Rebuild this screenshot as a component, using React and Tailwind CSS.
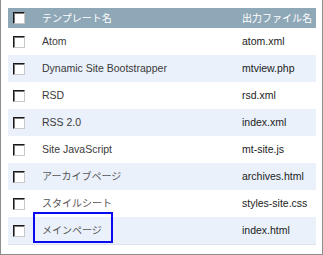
import React from 'react';

const rows = [
  { name: 'Atom', file: 'atom.xml' },
  { name: 'Dynamic Site Bootstrapper', file: 'mtview.php' },
  { name: 'RSD', file: 'rsd.xml' },
  { name: 'RSS 2.0', file: 'index.xml' },
  { name: 'Site JavaScript', file: 'mt-site.js' },
  { name: 'アーカイブページ', file: 'archives.html', jp: true },
  { name: 'スタイルシート', file: 'styles-site.css', jp: true },
  { name: 'メインページ', file: 'index.html', jp: true },
];

const Box = () => (
  <span className="block w-[12px] h-[12px] bg-white border border-t-[#1a1a1a] border-l-[#1a1a1a] border-r-[#c8c8c8] border-b-[#c8c8c8] shadow-[inset_1px_1px_0_#7a7a7a]" />
);

const jpFont = { fontFamily: '"Noto Sans CJK JP", sans-serif' };

export default function App() {
  return (
    <div
      className="w-[323px] h-[255px] bg-white border-l border-r border-b border-[#8e8e8e] pt-[8px] pl-[7px] pr-[6px] text-[10.5px] leading-none whitespace-nowrap"
      style={{ fontFamily: '"Liberation Sans", "Noto Sans CJK JP", sans-serif' }}
    >
      <div className="flex items-center h-[20px] bg-[#8fa8b8] text-white text-[10px]" style={jpFont}>
        <div className="w-[34px] pl-[5px]"><Box /></div>
        <div className="w-[200px]">テンプレート名</div>
        <div className="flex-1">出力ファイル名</div>
      </div>
      <div className="border-b border-[#dde3ea]">
        {rows.map((r, i) => (
          <div
            key={r.name}
            className={`relative flex items-center h-[27px] text-[#3a3a3a] ${i % 2 ? 'bg-[#eaf1fb]' : 'bg-white'}`}
          >
            {i === 7 && (
              <span className="absolute left-[25px] top-[-5px] w-[80px] h-[31px] border-2 border-[#0a0af0]" />
            )}
            <div className="w-[34px] pl-[5px]"><Box /></div>
            <div className="w-[200px]">
              {r.jp ? (
                <span className="text-[10px] text-[#555]" style={jpFont}>{r.name}</span>
              ) : (
                r.name
              )}
            </div>
            <div className="flex-1 text-[#222]">{r.file}</div>
          </div>
        ))}
      </div>
    </div>
  );
}
